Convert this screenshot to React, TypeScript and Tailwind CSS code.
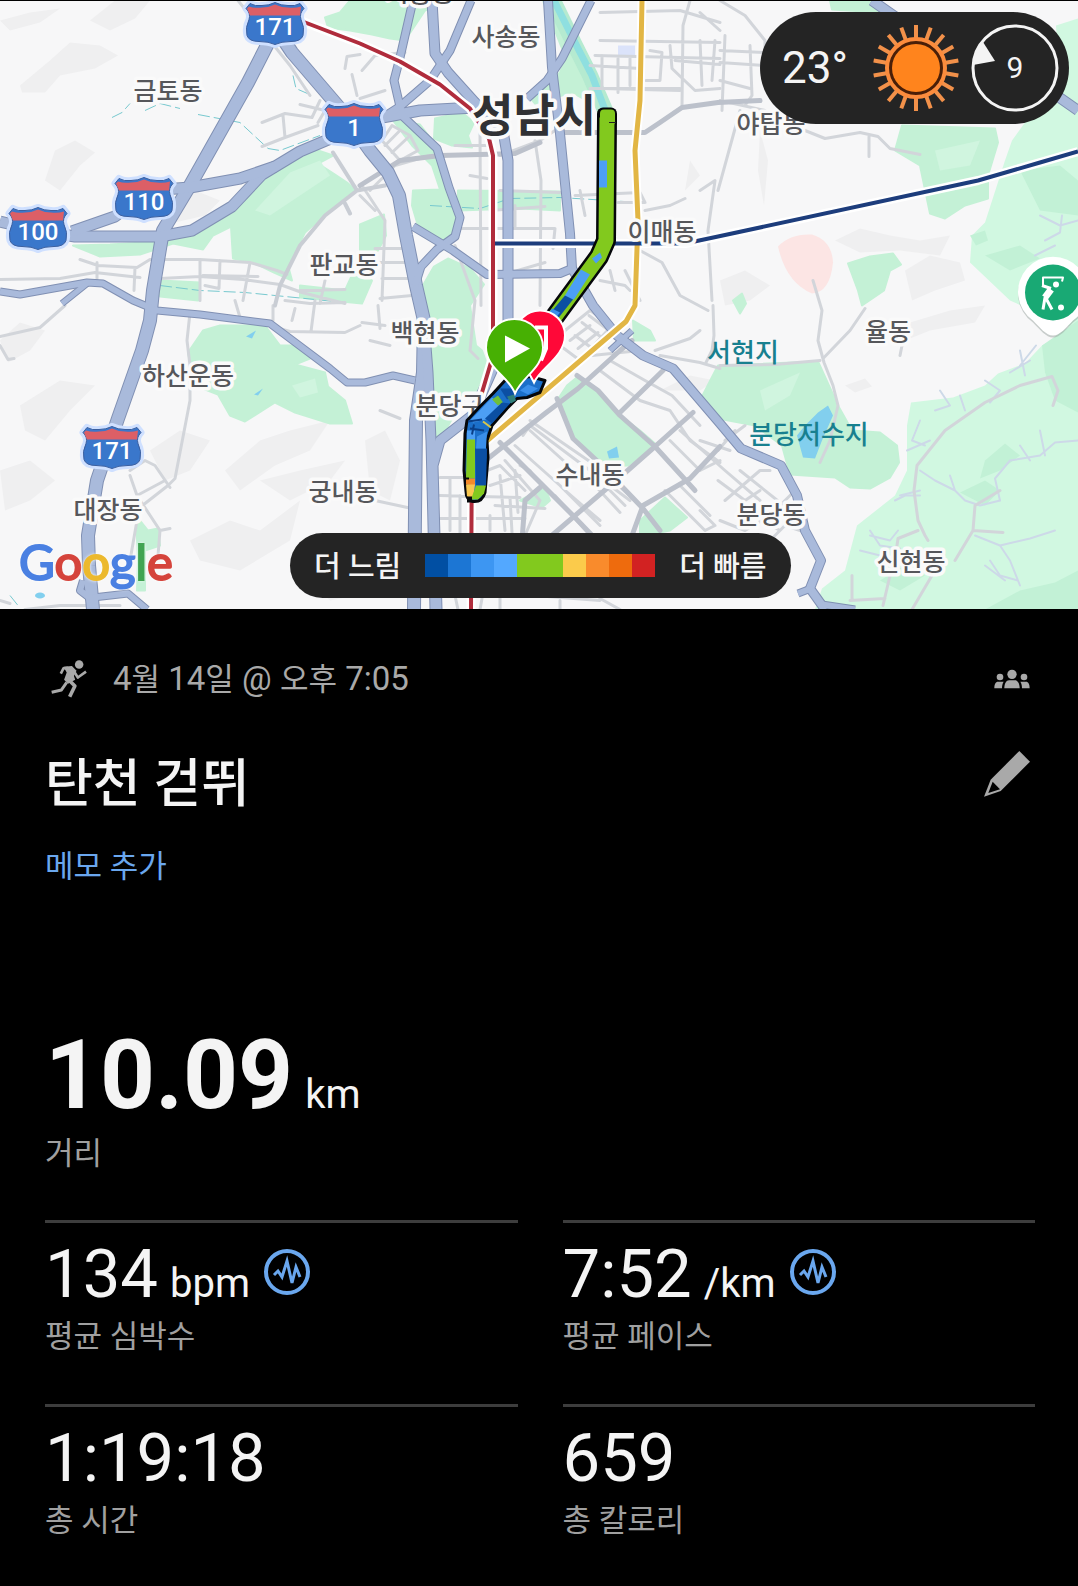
import React from "react";

const FONT = "font-['Roboto','Noto_Sans_CJK_KR',sans-serif]";

/* ---------- map data ---------- */

const hills = [
  "M20 85 50 60 70 42 100 45 118 55 95 68 60 75 45 92 22 92Z",
  "M0 20 30 12 60 8 40 22 10 30Z",
  "M55 150 75 140 95 152 80 165 60 190 45 180Z",
  "M90 20 115 0 150 0 135 18 110 30Z",
  "M160 205 195 190 220 200 205 215 175 222Z",
  "M0 340 20 322 45 330 30 350 8 362Z",
  "M20 405 60 380 95 385 70 410 45 440 25 430Z",
  "M0 470 30 460 55 480 30 500 5 510Z",
  "M225 470 260 440 290 430 330 420 310 450 275 465 240 490Z",
  "M190 540 230 520 260 530 300 500 290 540 240 570 200 560Z",
  "M260 480 300 470 345 460 330 480 290 500Z",
  "M150 450 180 430 210 440 190 470 165 480Z",
  "M300 570 340 560 390 545 380 590 330 600Z",
  "M365 440 385 430 400 460 390 500 370 490Z",
  "M720 280 745 270 770 285 750 300 725 305Z",
  "M835 240 860 228 890 235 920 240 950 235 940 255 900 250 860 252Z",
  "M905 270 930 255 960 262 965 280 935 290 912 300Z",
  "M900 325 950 310 985 305 975 322 930 330 905 340Z",
  "M660 390 690 375 715 380 700 390Z",
  "M845 385 865 378 872 386 855 392Z",
  "M690 160 700 175 685 190Z",
  "M760 130 768 160 764 205 758 170Z",
];

const parks = [
  "M293 160 318 150 333 155 318 163 335 174 347 182 356 190 333 207 305 232 288 265 292 280 274 272 253 262 233 258 231 226 213 235 203 249 173 243 140 254 100 256 73 245 110 244 160 241 200 232 227 214 257 182Z",
  "M325 17 340 12 350 0 445 0 425 10 405 40 390 38 372 34 350 30 328 27Z",
  "M300 285 345 290 355 268 372 280 362 303 300 297Z",
  "M360 224 384 214 386 235 378 250 360 258Z",
  "M393 120 420 124 436 145 448 190 458 208 452 236 438 244 420 232 412 205 413 190 440 189 432 165 412 145Z",
  "M458 190 560 191 560 210 520 208 458 210Z",
  "M435 118 462 112 474 122 468 135 472 147 452 145 434 138Z",
  "M543 0 556 0 582 50 600 85 606 105 590 102 572 92 535 103 530 97 560 72 566 58Z",
  "M428 305 420 290 434 266 448 258 470 268 484 284 470 305 476 345 482 350 490 372 478 392 462 400 440 440 432 435Z",
  "M160 280 200 282 198 300 160 296Z",
  "M188 352 203 330 220 325 265 325 280 345 300 345 310 358 295 364 325 372 328 386 345 400 352 423 330 423 295 412 275 402 245 421 230 415 218 394 195 385Z",
  "M557 400 567 385 578 376 600 395 620 415 640 430 655 443 628 465 600 466 585 450 574 440 570 425Z",
  "M520 500 545 487 550 500 542 507Z",
  "M640 520 665 497 687 517 670 530 640 536Z",
  "M633 320 650 330 655 340 634 340Z",
  "M700 400 718 365 818 361 838 405 852 430 880 432 897 445 899 462 890 477 870 488 850 487 835 477 790 474 782 445 755 425 718 418Z",
  "M895 150 902 125 995 128 998 142 988 175 988 198 965 205 945 218 930 213 920 165Z",
  "M848 263 870 256 893 253 901 264 890 270 884 290 862 305 858 290Z",
  "M830 0 870 0 880 12 832 9Z",
  "M733 300 742 293 746 303 740 313Z",
  "M136 515 148 530 158 528 160 545 145 550 145 590 137 590 138 560Z",
];

const meadows = [
  "M911 402 953 397 985 385 998 373 1025 363 1042 345 1078 325 1078 609 815 609 822 588 845 570 857 525 895 495 907 470 907 425Z",
  "M1056 25 1078 18 1078 330 1010 300 970 262 972 235 985 222 1005 160 1012 140 1030 115 1060 95Z",
];

const groves = [
  "M1042 345 1078 320 1078 412 1055 400 1045 372Z",
  "M985 460 1005 443 1020 455 1000 470 980 478Z",
  "M960 492 985 480 1000 490 985 505Z",
  "M1078 570 1055 582 1020 590 985 609 1078 609Z",
  "M970 235 985 230 988 240 976 245Z",
  "M1020 170 1060 165 1078 180 1078 215 1040 210Z",
  "M880 580 905 565 925 575 900 590Z",
  "M985 255 1020 245 1040 258 1010 270Z",
];

const lanes = [
  "M238 0 290 65 310 95M262 122 285 113 312 117 320 100M283 115 285 137 262 146M285 137 318 125M300 104 325 110 318 122",
  "M345 68 347 56 360 54M352 74 357 95M405 52 375 55 362 70M360 98 385 90",
  "M80 259 98 265 137 267 150 259 200 259 250 262 277 270 287 274M97 262 97 278M0 279 60 278 95 272 140 277M135 267 134 290M200 260 200 300M220 260 219 288 205 285M203 275 258 276M250 262 243 300M160 278 200 276 243 279 280 284 302 292 345 303M300 290 345 289M325 280 320 303M285 300 310 303 345 302",
  "M190 312 187 340 190 365 190 400 175 478 168 485 145 503M130 470 145 460 155 465 170 487M130 475 137 495 165 480M137 495 160 530 170 528M160 530 158 555M137 520 130 560",
  "M0 336 40 327 65 305M0 345 8 359 14 358M235 300 240 317 290 331 345 332 360 325M273 305 273 320M295 308 292 320M315 300 311 331",
  "M370 340 390 345M380 410 400 418M375 500 412 508M362 322 385 325M378 305 380 328",
  "M382 140 392 125 410 135 418 150 400 160ZM385 145 400 130M392 152 408 137M370 190 395 165 430 155 500 153M362 185 385 220 382 300M360 195 375 210M375 248 412 248M380 262 412 262M382 278 412 278M412 295 380 298",
  "M455 145 487 145M480 130 481 305M470 175 487 178M460 228 555 228 553 248M515 205 515 228M535 140 541 180 540 305M500 155 540 140 555 130M500 190 560 192M490 210 545 206M500 275 545 262M455 245 475 300 470 350 478 358",
  "M600 12 680 10 720 22M690 0 683 25 682 105M600 40 720 42M595 55 720 58M590 65 640 68M602 55 602 88 680 90M618 58 618 92M630 58 630 85M650 50 662 52 660 80 646 80M670 45 672 68 695 90 720 88M700 12 720 30M675 60 720 64M700 40 702 85M715 40 712 80M590 88 680 88",
  "M720 0 745 15 765 40 765 52 720 50M725 35 722 110M750 45 752 95 745 105M720 62 765 65M720 80 750 88M740 110 718 190M720 100 765 110",
  "M805 130 825 138 860 132 878 136 890 148 920 154M869 136 869 156",
  "M575 195 640 192 645 202 618 202M580 190 585 215M645 210 670 205 685 198M700 190 715 180 708 230 712 300",
  "M640 250 662 262 680 295 708 310M625 270 640 300M600 280 625 285 630 290M610 270 615 290",
  "M713 305 714 335 712 350 706 362M813 280 822 310 818 340 824 362 833 385 838 405 830 440 820 462",
  "M720 365 775 364 820 360M824 357 850 330 865 308",
  "M660 355 700 362 720 368M655 350 690 338 700 330M592 355 640 350",
  "M565 330 590 310 612 325 580 360 560 345ZM575 335 595 350M582 322 603 338M589 315 609 330M570 340 590 325M578 348 598 332",
  "M520 465 530 470 535 478M600 370 640 400 670 410 690 440 720 462M610 360 645 380 672 395 700 425",
  "M523 435 530 425 590 470 630 500M530 420 600 468 640 505M515 445 560 485 600 525M505 460 540 500 525 535 523 560M530 430 580 475M555 495 590 535M565 490 600 520M600 480 625 505M595 485 620 512",
  "M487 470 500 465 525 490M490 485 520 475M495 505 545 508M500 475 505 530M515 470 518 512M440 477 470 477M440 495 520 497M440 518 525 518M450 478 450 530M460 495 460 535M490 515 490 530M510 497 512 532",
  "M470 590 600 600M480 609 482 598M560 600 560 609M600 598 620 609M455 595 458 609M500 596 500 609",
  "M670 440 700 470 720 460M680 430 725 470 760 500M665 490 705 530 715 525 700 510M680 485 710 515M718 480 745 500 760 490M725 500 760 470 770 470M720 520 745 530 770 515 795 490M740 470 790 510M730 450 700 440M735 430 718 450M745 425 725 440",
  "M770 540 785 525 800 530M745 510 780 530",
  "M907 320 900 355M1053 405 1058 390 1052 376 1020 385 985 402 945 430 917 465 914 490 918 520 925 535 928 540M918 530 898 538 897 545M1000 490 975 505 973 530 955 560M973 530 1003 532M932 575 912 609M890 575 883 605M885 598 850 600M852 575 852 600",
  "M25 609 60 605 120 605M0 600 10 603",
];

const trails = [
  "M940 390 950 405 935 410M960 395 965 410M985 380 1000 390 990 402M1020 350 1025 375M1030 360 1010 372M1036 345 1020 365",
  "M920 420 912 440 925 445M907 450 930 440M920 470 935 480 955 490 965 500 980 505 1000 500M950 475 955 490M900 495 920 490",
  "M1078 440 1055 442 1040 455 1010 460 995 478 1000 500M1040 430 1045 455M1020 445 1030 460",
  "M895 500 905 495 920 495M870 535 890 540 898 530M870 530 880 545 900 548M860 550 880 555",
  "M975 535 1000 545 1010 560 1020 585M1000 545 1030 538 1055 530M990 560 1000 575 1018 580M985 565 1005 580",
  "M1040 215 1060 225 1078 220M1045 240 1060 232 1062 215M1035 255 1055 245",
];

const avenues = [
  "M488 458 545 413 578 388 620 350 632 340",
  "M500 442 540 482 573 515 597 540",
  "M557 398 573 438 600 463 643 508 660 530",
  "M577 375 598 390 620 415 655 446 695 490",
  "M663 370 620 412M655 446 622 475 540 545",
  "M720 446 690 478 643 505 632 535",
  "M693 412 655 446M540 487 525 500 522 540",
  "M560 132 645 132 660 122 682 107 718 102 760 100",
  "M360 185 400 160 440 155 515 153 540 142",
];

const highways = [
  { d: "M272 35 248 82 190 185 163 230 153 290 150 320 142 350 118 418 97 480 88 535 89 565 93 609", w: 12 },
  { d: "M272 22 292 52 340 108 370 150 388 172 399 195 406 235 416 285 424 320 423 372 416 420 414 609", w: 12 },
  { d: "M424 320 428 372 431 440 435 609", w: 9 },
  { d: "M0 221 38 230 75 236 160 236 192 230 232 206 262 174 300 151 345 132 382 117 420 110 475 107", w: 10 },
  { d: "M72 231 115 216 150 190 190 187 240 178 275 166", w: 10 },
  { d: "M413 0 400 57 394 80 402 115 420 132 437 148 449 187 460 217 455 236 437 249 421 266 415 285", w: 7 },
  { d: "M471 0 450 50 430 80 400 106 375 122", w: 7 },
  { d: "M432 0 435 53 448 72 475 102 503 130 508 160 508 335 472 415 440 440 433 465 437 609", w: 9 },
  { d: "M548 0 552 67 560 133 570 233 572 268 593 305 617 335 643 355 673 368 720 423 741 448 781 465 797 495 805 530 821 560 810 588 825 609", w: 8 },
  { d: "M591 0 562 58 547 80 527 98", w: 7 },
  { d: "M413 226 453 250 487 274 560 273 572 268", w: 7 },
  { d: "M0 291 20 294 87 282 103 283 133 300 157 310 200 314 270 323 330 368 347 382 365 382 393 375 415 380", w: 6 },
  { d: "M62 303 87 283M632 330 610 350", w: 5 },
  { d: "M93 600 80 590 83 580M93 597 128 593 147 609", w: 6 },
  { d: "M872 0 892 14 960 60 1058 96 1078 110", w: 9 },
  { d: "M811 588 798 593M822 604 855 609", w: 6 },
];

const streams = [
  "M112 117 122 112 130 103M145 110 160 103 180 108M198 114 240 122 268 148 280 150 320 135",
  "M293 75 296 88 312 95",
  "M160 285 200 290 245 292 345 302M430 205 480 208 510 198 560 197 640 202",
  "M10 595 18 605",
];

const places = [
  { t: "사송동", x: 506, y: 45 },
  { t: "금토동", x: 168, y: 99 },
  { t: "야탑동", x: 771, y: 132 },
  { t: "이매동", x: 662, y: 240 },
  { t: "판교동", x: 344, y: 273 },
  { t: "백현동", x: 425, y: 341 },
  { t: "율동", x: 888, y: 340 },
  { t: "하산운동", x: 188, y: 384 },
  { t: "분당구", x: 450, y: 414 },
  { t: "수내동", x: 590, y: 483 },
  { t: "대장동", x: 108, y: 518 },
  { t: "궁내동", x: 343, y: 500 },
  { t: "분당동", x: 771, y: 523 },
  { t: "신현동", x: 911, y: 570 },
  { t: "시흥동", x: 420, y: 1 },
];

const waters = [
  { t: "서현지", x: 743, y: 361 },
  { t: "분당저수지", x: 809, y: 443 },
];

const shields = [
  { n: "171", x: 275, y: 23 },
  { n: "1", x: 354, y: 124 },
  { n: "110", x: 144, y: 198 },
  { n: "100", x: 38, y: 228 },
  { n: "171", x: 112, y: 447 },
];

const routeUpper = "M607 117 606 240 599 256 563 305 530 350";
const routeLower =
  "M467 420 480 406 493 393 505 380 530 376 545 380 540 392 527 397 517 398 507 408 492 425 487 440 488 457 485 492Q482 502 473 501 466 499 466 491L464 470 465 433Z";

function Shield({ n, x, y }: { n: string; x: number; y: number }) {
  const body =
    "M-25 -20Q-20 -17 -13 -18Q-6 -18 0 -21Q6 -18 13 -18Q20 -17 25 -20L29 -15Q24 -10 26 -4Q30 4 28 12Q26 18 16 18Q6 18 0 21Q-6 18 -16 18Q-26 18 -28 12Q-30 4 -26 -4Q-24 -10 -29 -15Z";
  return (
    <g transform={`translate(${x} ${y})`}>
      <path d={body} fill="#cfe0ff" stroke="#cfe0ff" strokeWidth="7" strokeLinejoin="round" />
      <path d={body} fill="#3a77cb" stroke="#3b5f9f" strokeWidth="1" />
      <path d="M-26 -17Q-20 -15 -13 -16Q-6 -16 0 -19Q6 -16 13 -16Q20 -15 26 -17L25 -8H-25L-28 -15Z" fill="#dc5f66" />
      <text y="11" textAnchor="middle" fontSize="24" fontWeight="500" fill="#fff">{n}</text>
    </g>
  );
}

function MapDrawing() {
  return (
    <svg viewBox="0 0 1078 609" preserveAspectRatio="xMidYMid slice" className={`block h-full w-full ${FONT}`} role="img" aria-label="성남시 경로 지도">
      <rect width="1078" height="609" fill="#f7f7f8" />
      <g fill="#efeff0">{hills.map((d, i) => <path key={i} d={d} />)}</g>
      <path d="M778 246Q790 233 812 234Q832 240 833 262Q830 292 812 293Q786 282 778 246Z" fill="#fce5e4" />
      <g fill="#c4f1d6" stroke="#c4f1d6" strokeWidth="2" strokeLinejoin="round">{parks.map((d, i) => <path key={i} d={d} />)}</g>
      <g fill="#d1f8e1">{meadows.map((d, i) => <path key={i} d={d} />)}</g>
      <g fill="#c2f1d6">{groves.map((d, i) => <path key={i} d={d} />)}</g>
      <g fill="#d0f5df">
        <path d="M290 172 320 160 330 175 300 195 270 215 255 210Z" />
        <path d="M292 385 315 378 318 392 300 397Z" />
        <path d="M760 390 800 372 790 395 765 410Z" />
        <path d="M935 150 980 140 970 165 940 170Z" />
      </g>
      <g fill="none" stroke="#77c9cf" strokeWidth="1" strokeDasharray="12 4">{streams.map((d, i) => <path key={i} d={d} />)}</g>
      <path d="M553 0 575 45 590 75 606 112" fill="none" stroke="#b5ead0" strokeWidth="16" />
      <path d="M554 0 578 48 592 75 606 112" fill="none" stroke="#8fdfe0" strokeWidth="7" />
      <g fill="#82cfee">
        <path d="M818 412 828 405 833 415 822 440 815 458 803 457 797 435 805 425Z" />
        <path d="M246 336 256 330 252 338ZM254 394 263 388 258 395ZM607 451 617 446 619 457 609 458Z" />
        <ellipse cx="40" cy="595" rx="5" ry="3" />
      </g>
      <rect x="618" y="45" width="17" height="12" fill="#dbe3fa" />
      <g fill="none" strokeLinejoin="round" strokeLinecap="round">
        <g stroke="#cdd9e8" strokeWidth="2">{trails.map((d, i) => <path key={i} d={d} />)}</g>
        <g stroke="#d2d5da" strokeWidth="3">{lanes.map((d, i) => <path key={i} d={d} />)}</g>
        <path d="M357 190 325 215 300 245 280 285 275 305M333 152 357 190 385 185M345 203 350 213" stroke="#c9cdd4" strokeWidth="4" />
        <g stroke="#bcc1cb" strokeWidth="5">{avenues.map((d, i) => <path key={i} d={d} />)}</g>
        <g stroke="#8090b3">{highways.map((h, i) => <path key={i} d={h.d} strokeWidth={h.w + 2} strokeLinecap="butt" />)}</g>
        <g stroke="#a9badb">{highways.map((h, i) => <path key={i} d={h.d} strokeWidth={h.w} strokeLinecap="butt" />)}</g>
      </g>
      <g fill="none" strokeLinejoin="round">
        <g stroke="#fff" strokeWidth="9">
          <path d="M642 0 640 100 635 150 638 220 635 305 626 321 485 442" />
          <path d="M300 20 360 43 400 61 440 84 470 108 489 138 493 155 493 355 482 392 472 430 471 609" />
          <path d="M493 243H685L718 236 978 180 1040 162 1078 151" />
        </g>
        <path d="M642 0 640 100 635 150 638 220 635 305 626 321 485 442" stroke="#e2b644" strokeWidth="5" />
        <path d="M493 243H685L718 236 978 180 1040 162 1078 151" stroke="#1d3d7c" strokeWidth="4" />
        <path d="M300 20 360 43 400 61 440 84 470 108 489 138 493 155 493 355 482 392 472 430 471 609" stroke="#b02c3c" strokeWidth="4" />
      </g>

      <g textAnchor="middle" fontWeight="500" strokeLinejoin="round" paintOrder="stroke" stroke="#fafafa" strokeWidth="7">
        <g fill="#56575b" fontSize="25">{places.map((p) => <text key={p.t} x={p.x} y={p.y}>{p.t}</text>)}</g>
        <g fill="#18808f" fontSize="26" stroke="none">{waters.map((p) => <text key={p.t} x={p.x} y={p.y}>{p.t}</text>)}</g>
        <text x="534" y="131" fontSize="45" fontWeight="700" fill="#303134">성남시</text>
      </g>

      {shields.map((s, i) => <Shield key={i} {...s} />)}

      <g fill="none" strokeLinejoin="round">
        <path d={routeUpper} stroke="#05070a" strokeWidth="20" />
        <rect x="597" y="107" width="20" height="20" rx="6" fill="#05070a" />
        <path d={routeUpper} stroke="#82c91e" strokeWidth="15" />
        <rect x="600" y="109" width="15" height="16" rx="4" fill="#82c91e" />
        <path d={routeLower} fill="#1b6fc9" stroke="#05070a" strokeWidth="3" />
      </g>
      <g>
        <rect x="599" y="160" width="8" height="27" fill="#4c9ff5" />
        <path d="M609 122H616" stroke="#222" strokeWidth="1" />
        <path d="M592 258 600 252 602 257 596 263Z" fill="#4c9ff5" />
        <path d="M581 269 590 274 574 299 563 298Z" fill="#4c9ff5" />
        <path d="M565 295 573 299 558 318 549 314Z" fill="#0b4fa3" />
        <path d="M552 308 560 312 550 325 540 324Z" fill="#3a8fea" />
        <path d="M467 438 475 438 475 478 466 478Z" fill="#82c91e" />
        <path d="M467 430 475 430 475 439 467 439Z" fill="#4c9ff5" />
        <path d="M466 478 475 478 475 485 466 484Z" fill="#f58a2a" />
        <path d="M466 484 475 484 473 498 467 496Z" fill="#f9c74f" />
        <path d="M475 448 487 448 486 485 476 485Z" fill="#0b4fa3" />
        <path d="M476 485 486 485 484 493 478 499 471 499Z" fill="#82c91e" />
        <path d="M471 419 492 397 501 404 486 419 473 422Z" fill="#4c9ff5" />
        <path d="M492 399 498 395 503 402 498 405Z" fill="#6fbf3a" />
        <path d="M500 388 520 388 514 396 507 399Z" fill="#0b4fa3" />
        <path d="M507 396 514 394 516 400 511 403Z" fill="#2f7f7a" />
        <path d="M485 418 502 402 510 403 492 423Z" fill="#0b4fa3" />
        <path d="M468 421 482 419M470 428 484 430M472 434 474 424" stroke="#0a3e86" strokeWidth="2" />
        <path d="M477 436 487 431 486 448 476 448Z" fill="#3a8fea" />
        <path d="M483 421 491 427" stroke="#d8c64b" strokeWidth="2" />
        <path d="M520 390 528 384 538 388 528 394Z" fill="#3a8fea" />
        <path d="M465 478H469" stroke="#05070a" strokeWidth="2" />
        <rect x="467" y="496" width="5" height="6" fill="#05070a" />
      </g>

      <path d="M534 382C540 368 565 356 565 335A25 25 0 1 0 515 335C515 356 526 366 534 382Z" fill="#ff0838" stroke="#fff" strokeWidth="2" />
      <path d="M535 327H546V348L541 360" fill="none" stroke="#fff" strokeWidth="4" />
      <path d="M515 393C509 376 486 368 486 347A28 28 0 1 1 543 347C543 368 522 376 515 393Z" fill="#47b003" stroke="#fff" strokeWidth="2" />
      <path d="M505 335V362L530 348Z" fill="#fff" />

      <g>
        <path d="M1053 337C1046 337 1040 329 1033 322A35 35 0 1 1 1073 322C1066 329 1060 337 1053 337Z" fill="#9aa3a0" opacity=".5" />
        <path d="M1053 335C1046 335 1040 327 1033 320A35 35 0 1 1 1073 320C1066 327 1060 335 1053 335Z" fill="#fff" />
        <circle cx="1053" cy="292" r="28" fill="#19a974" />
        <g fill="none" stroke="#fff" strokeLinejoin="round">
          <path d="M1043 286V277H1063L1062 281" strokeWidth="2" />
          <path d="M1042 285 1051 288" strokeWidth="3" />
          <path d="M1051 289 1045 297" strokeWidth="7" />
          <path d="M1045 297 1043 309M1045 296 1052 309" strokeWidth="3" />
        </g>
        <circle cx="1056" cy="284" r="3" fill="#fff" />
        <circle cx="1061" cy="307" r="3" fill="#fff" />
      </g>
    </svg>
  );
}

/* ---------- icons ---------- */

function Sun() {
  const rays = Array.from({ length: 18 }, (_, i) => i * 20);
  return (
    <svg viewBox="-44 -44 88 88" className="size-[88px] shrink-0" aria-hidden="true">
      <g stroke="#f2914a" strokeWidth="4">
        {rays.map((a) => <path key={a} d="M0 -30V-43" transform={`rotate(${a})`} />)}
      </g>
      <circle r="29" fill="#4a1f08" stroke="#fb8c3d" strokeWidth="4" />
      <circle r="24" fill="#ff841d" />
    </svg>
  );
}

function Wind() {
  return (
    <div className="relative flex size-[88px] shrink-0 items-center justify-center">
      <svg viewBox="-44 -44 88 88" className="absolute inset-0" aria-hidden="true">
        <circle r="42" fill="none" stroke="#f4f4f4" strokeWidth="3" />
        <path d="M-32 -26 -20 -7 -42 -3A42 42 0 0 1 -32 -26Z" fill="#f4f4f4" />
      </svg>
      <span className="text-[30px] leading-9">9</span>
    </div>
  );
}

function Runner() {
  return (
    <svg viewBox="0 0 110 115" className="h-[38px] w-9 shrink-0" fill="none" stroke="#a9a9a9" strokeLinejoin="round" aria-hidden="true">
      <circle cx="86" cy="13" r="13" fill="#a9a9a9" stroke="none" />
      <path d="M38 20 64 18 78 32 70 48 74 60 52 72 40 60 48 38Z" fill="#a9a9a9" stroke="none" />
      <path d="M52 23 38 25 30 41M70 34 82 53 107 35" strokeWidth="8" />
      <path d="M2 98 32 91 48 68" strokeWidth="9" />
      <path d="M56 62 73 79 57 112" strokeWidth="11" />
    </svg>
  );
}

function People() {
  return (
    <svg viewBox="0 0 108 58" className="h-5 w-9" fill="#a9a9a9" aria-hidden="true">
      <circle cx="54" cy="15" r="14" />
      <circle cx="18" cy="23" r="10" />
      <circle cx="90" cy="23" r="10" />
      <path d="M31 57C31 42 37 33 45 33H63C71 33 77 42 77 57Z" />
      <path d="M1 57C1 44 5 37 12 37H29C25 43 24 50 24 57ZM107 57C107 44 103 37 96 37H79C83 43 84 50 84 57Z" />
    </svg>
  );
}

function Pencil() {
  return (
    <svg viewBox="0 0 138 138" className="size-[46px]" aria-hidden="true">
      <path d="M106 0 138 32 50 120 0 137 20 86Z" fill="#a9a9a9" />
      <path d="M26 92 48 115 13 126Z" fill="#000" />
    </svg>
  );
}

function Pulse() {
  return (
    <svg viewBox="0 0 47 47" className="size-[47px]" fill="none" stroke="#6aa7ee" aria-hidden="true">
      <circle cx="23" cy="23" r="21" strokeWidth="4" />
      <path d="M10 26 14 22 18 28 23 12 28 34 32 18 36 28" strokeWidth="3" />
    </svg>
  );
}

/* ---------- stats ---------- */

type Stat = { value: string; unit?: string; label: string; chart?: boolean };

const stats: Stat[] = [
  { value: "134", unit: "bpm", label: "평균 심박수", chart: true },
  { value: "7:52", unit: "/km", label: "평균 페이스", chart: true },
  { value: "1:19:18", label: "총 시간" },
  { value: "659", label: "총 칼로리" },
];

const legend = [
  "bg-[#014fa3]", "bg-[#1c76d4]", "bg-[#3d96f2]", "bg-[#53a8ff]", "bg-[#82c91e]",
  "bg-[#82c91e]", "bg-[#fbcb4b]", "bg-[#f98b2c]", "bg-[#ee6b0d]", "bg-[#d22222]",
];

const logo = [
  { c: "G", tone: "text-[#4a80e2]" },
  { c: "o", tone: "text-[#d5443c]" },
  { c: "o", tone: "text-[#ecb92e]" },
  { c: "g", tone: "text-[#4a80e2]" },
  { c: "l", tone: "text-[#41a453]" },
  { c: "e", tone: "text-[#d5443c]" },
];

export default function App() {
  return (
    <main className={`min-h-screen bg-black text-[#f4f4f4] ${FONT}`}>
      <section className="relative aspect-[1078/609] w-full overflow-hidden border-t border-black bg-[#f7f7f8]">
        <MapDrawing />

        <div className="absolute top-[11px] right-[9px] flex h-28 items-center gap-6 rounded-full bg-[#242424] pr-[10px] pl-[22px]">
          <span className="text-[44px] leading-[56px]">23°</span>
          <div className="flex items-center gap-[11px]">
            <Sun />
            <Wind />
          </div>
        </div>

        <div className="absolute bottom-[11px] left-[290px] flex h-[65px] items-center gap-6 rounded-full bg-[#242424] px-6 text-[29px] leading-10 font-medium">
          <span className="pt-[2px]">더 느림</span>
          <div className="flex h-[23px]">
            {legend.map((c, i) => <i key={i} className={`w-[23px] ${c}`} />)}
          </div>
          <span className="pt-[2px]">더 빠름</span>
        </div>

        <div
          className="absolute bottom-5 left-[19px] font-['Lato',sans-serif] text-[49px] leading-[56px] [text-shadow:0_0_3px_#fff,0_0_4px_#fff]"
          aria-label="Google"
        >
          {logo.map((l, i) => (
            <span key={i} className={`[-webkit-text-stroke:2px_currentcolor] ${l.tone}`}>{l.c}</span>
          ))}
        </div>
      </section>

      <div className="pt-[49px] pr-[43px] pb-12 pl-[45px]">
        <div className="flex items-center justify-between pr-[5px] pl-[6px] text-[#a9a9a9]">
          <div className="flex items-center gap-[26px]">
            <Runner />
            <p className="pt-[2px] text-[33px] leading-[38px]">
              4<span className="text-[31px]">월</span> 14<span className="text-[31px]">일</span> @ <span className="text-[31px]">오후</span> 7:05
            </p>
          </div>
          <button type="button" aria-label="공개 범위"><People /></button>
        </div>

        <div className="mt-[52px] flex items-start justify-between pr-[5px]">
          <h1 className="pt-[3px] text-[52px] leading-[62px] font-medium">탄천 걷뛰</h1>
          <button type="button" aria-label="제목 편집"><Pencil /></button>
        </div>

        <button type="button" className="mt-[31px] block text-[31px] leading-10 text-[#6aa7ee]">메모 추가</button>

        <div className="mt-[140px]">
          <p className="flex items-baseline gap-3">
            <span className="text-[96px] leading-[96px] font-bold">10.09</span>
            <span className="text-[40px] leading-[48px]">km</span>
          </p>
          <p className="mt-[11px] text-[31px] leading-10 text-[#a0a0a0]">거리</p>
        </div>

        <div className="mt-[46px] grid grid-cols-2 gap-x-[45px] gap-y-[47px]">
          {stats.map((s) => (
            <div key={s.label} className="border-t-[3px] border-[#3d3d3d] pt-[17px]">
              <div className="flex h-[68px] items-baseline">
                <span className="text-[67px] leading-[68px]">{s.value}</span>
                {s.unit && <span className="ml-3 text-[40px] leading-[48px]">{s.unit}</span>}
                {s.chart && (
                  <button type="button" className="mt-[9px] ml-[14px] self-start" aria-label={`${s.label} 차트`}><Pulse /></button>
                )}
              </div>
              <p className="mt-[9px] text-[31px] leading-10 text-[#a0a0a0]">{s.label}</p>
            </div>
          ))}
        </div>
      </div>
    </main>
  );
}
